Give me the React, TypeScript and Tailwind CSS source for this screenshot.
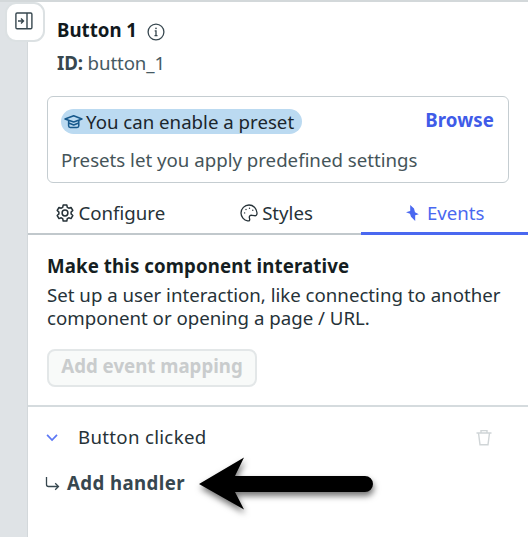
import React from 'react';

function PanelIcon() {
  return (
    <svg width="18" height="18" viewBox="0 0 18 18" fill="none" stroke="#37474f" strokeWidth="1.4">
      <rect x="0.9" y="1" width="16" height="15.8" rx="1.2" />
      <path d="M12 1v16M3 9h5.500M6 6.500 8.500 9 6 11.500" />
    </svg>
  );
}

function InfoIcon() {
  return (
    <svg width="18" height="18" viewBox="0 0 18 18" fill="none" stroke="#37474f" strokeWidth="1.3">
      <circle cx="9" cy="9" r="7.9" />
      <path d="M7.700 7.900H9v4.500M7.500 12.600h3" />
      <circle cx="9" cy="5.400" r="0.800" fill="#37474f" stroke="none" />
    </svg>
  );
}

function CapIcon() {
  return (
    <svg width="19" height="15" viewBox="0 0 19 15" fill="none" stroke="#17598c" strokeWidth="1.500" strokeLinejoin="round">
      <path d="M1 5 9.700 1.700 18 5l-8.300 3zM4.600 6.500v5.300q0 1.700 1.700 1.700h6.800q1.700 0 1.700-1.700V6.500M4.800 9l4.900 2 4.900-2" />
    </svg>
  );
}

function GearIcon() {
  return (
    <svg width="18" height="18" viewBox="0 0 18 18" fill="none" stroke="#263238" strokeWidth="1.500" strokeLinejoin="round">
      <path d="M7.200 1h3.600l.5 2.300 1.500.9 2.200-.8 1.800 3.100-1.700 1.600v1.800l1.700 1.600-1.800 3.100-2.200-.8-1.500.9-.5 2.300H7.200l-.5-2.300-1.500-.9-2.200.8-1.800-3.100 1.700-1.600V8.100L1.200 6.500 3 3.400l2.200.8 1.500-.9z" />
      <circle cx="9" cy="9" r="2.900" />
    </svg>
  );
}

function PaletteIcon() {
  return (
    <svg width="18" height="18" viewBox="0 0 18 18" fill="none" stroke="#263238" strokeWidth="1.300">
      <path d="M7.600 16.800C9.700 17.300 10 16 9.500 14.400c-.7-2.100.5-3.500 2.600-3.100l2.300.4c1.800.3 2.800-1 2.600-2.900C16.600 4.200 13.300 1 9 1 4.600 1 1 4.600 1 9c0 3.800 2.900 7.100 6.600 7.800z" />
      <g fill="#263238" stroke="none">
        <circle cx="4.600" cy="8.900" r="0.700" />
        <circle cx="6" cy="5.500" r="0.700" />
        <circle cx="9.500" cy="4.300" r="0.700" />
        <circle cx="12.800" cy="6.300" r="0.700" />
      </g>
    </svg>
  );
}

function Tab({ className, children }: { className: string; children: React.ReactNode }) {
  return <button className={`flex flex-1 items-center justify-center ${className}`}>{children}</button>;
}

export default function App() {
  return (
    <div className="relative flex h-[537px] w-[528px] overflow-hidden border-t-2 border-[#d3d8da] bg-white font-['Noto_Sans',sans-serif] text-[18.66px] leading-[24px] text-[#263238]">
      <aside className="w-[28px] shrink-0 border-r border-[#d3d8db] bg-[#dfe3e6]" />
      <button className="absolute top-0 left-[5px] flex h-[40px] w-[40px] items-center justify-center rounded-[11px] border-2 border-[#dce1e3] bg-white pr-[2px] pb-[2px]">
        <PanelIcon />
      </button>
      <main className="flex w-[500px] shrink-0 flex-col">
        <header className="flex h-[94px] flex-col pt-[16px] pl-[29px]">
          <div className="flex h-[24px] items-center">
            <h1 className="w-[90px] font-bold whitespace-nowrap text-[#11191d]">Button 1</h1>
            <span className="pt-[4px]"><InfoIcon /></span>
          </div>
          <p className="mt-[9px] tracking-[-0.1px] text-[#455a64]"><b className="text-[#37474f]">ID:</b> button_1</p>
        </header>
        <section className="ml-[19px] h-[87px] w-[462px] rounded-[6px] border border-[#c5cdd1] px-[13px] pt-[12px]">
          <div className="flex items-start justify-between">
            <span className="flex h-[25px] w-[241px] items-center rounded-full bg-[#bbdaf1] pl-[3px] whitespace-nowrap">
              <CapIcon /><span className="ml-[3px] text-[#1b262c]">You can enable a preset</span>
            </span>
            <button className="-mt-[1px] mr-[1px] font-bold tracking-[0.1px] text-[#405be8]">Browse</button>
          </div>
          <p className="mt-[14px] whitespace-nowrap text-[#455459]">Presets let you apply predefined settings</p>
        </section>
        <nav className="mt-[10px] flex h-[42px] border-b-2 border-[#c1c8cc]">
          <Tab className="h-[39px] gap-[4px]"><GearIcon />Configure</Tab>
          <Tab className="h-[39px] gap-[4px] pr-[2px]"><PaletteIcon />Styles</Tab>
          <Tab className="h-[42px] gap-[8px] border-b-[3px] border-[#4a68f0] pl-[1px] text-[#4a68f0]">
            <svg width="13" height="16" viewBox="0 0 13 16" fill="#4a68f0"><path d="M4.200 0 8 3.600 9 7.200 12.800 9.200 9.200 10.200 9.200 16 5 11.800 4 8.800 0 7.200 4.200 6z" /></svg>
            Events
          </Tab>
        </nav>
        <section className="h-[172px] border-b-2 border-[#d5dbde] pt-[19px] pl-[19px]">
          <h2 className="font-bold tracking-[0.1px] text-[#151e22]">Make this component interative</h2>
          <p className="mt-[5px] whitespace-nowrap">Set up a user interaction, like connecting to another<br /><span className="relative -top-px">component or opening a page / URL.</span></p>
          <button disabled className="mt-[18px] h-[38px] w-[210px] rounded-[8px] border-2 border-[#e3e7e8] bg-[#f8faf9] pb-[4px] font-bold whitespace-nowrap text-[#c9cccd]">Add event mapping</button>
        </section>
        <div className="mt-[18px] flex h-[24px] items-center pl-[18px]">
          <svg width="13" height="9" viewBox="0 0 14 10" fill="none" stroke="#5c78f5" strokeWidth="1.900"><path d="M1 2 6.500 7.800 12 2" /></svg>
          <span className="ml-[19px] flex-1 tracking-[0.3px]">Button clicked</span>
          <svg className="mr-[36px]" width="16" height="17" viewBox="0 0 16 17" fill="none" stroke="#d0d5d7" strokeWidth="1.400"><path d="M.5 4h15M5 4V1.600h6V4M2.500 4l1.500 11.700h8L13.500 4" /></svg>
        </div>
        <div className="mt-[22px] flex h-[24px] items-center pl-[17px]">
          <svg width="15" height="15" viewBox="0 0 15 15" fill="none" stroke="#37474f" strokeWidth="1.300"><path d="M1.500 1v7.500q0 2 2 2H13M10.200 7.200l3.300 3.300-3.300 3.300" /></svg>
          <span className="ml-[7px] font-bold tracking-[0.400px] whitespace-nowrap text-[#37474f]">Add handler</span>
        </div>
      </main>
      <svg className="absolute top-[450px] left-[194px] drop-shadow-[1px_4px_3px_rgba(0,0,0,0.550)]" width="186" height="66" viewBox="0 0 186 66">
        <path d="M5 32 50 5.500 41 24H171a8 8 0 0 1 0 16H41l9 17.500z" />
      </svg>
    </div>
  );
}
